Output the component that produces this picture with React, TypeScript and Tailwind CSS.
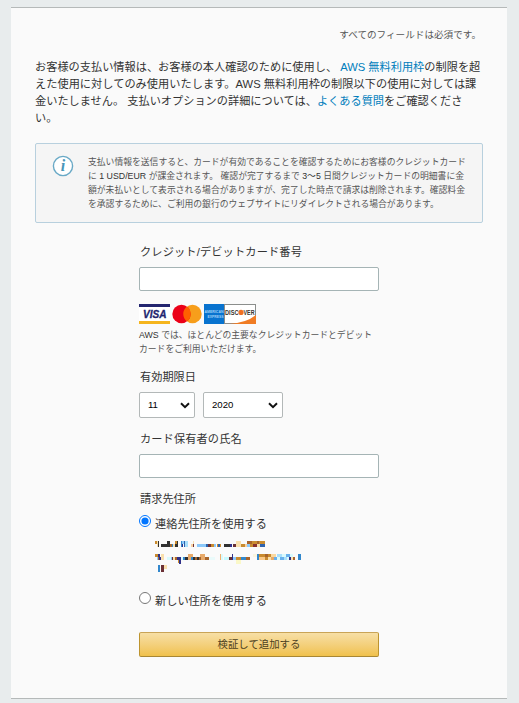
import React from "react";

const NAVY = "#23256f";
const jp = "font-['Liberation_Sans','Noto_Sans_CJK_JP',sans-serif]";

function InfoIcon() {
  return (
    <svg width="22" height="22" viewBox="0 0 22 22">
      <circle cx="11" cy="11" r="9.6" fill="#fff" stroke="#69a9c6" strokeWidth="1.4" />
      <text x="11" y="16.4" textAnchor="middle" fontFamily="Liberation Serif, serif" fontStyle="italic" fontWeight="bold" fontSize="16" fill="#4796ba">i</text>
    </svg>
  );
}

function CardLogos() {
  return (
    <svg width="117" height="20" viewBox="0 0 117 20" className="block" fontFamily="Liberation Sans, sans-serif">
      <rect width="31" height="20" fill="#fff" />
      <rect width="31" height="3" fill={NAVY} />
      <rect y="17" width="31" height="3" fill="#f5b51e" />
      <text x="4" y="14" fontSize="10.5" fontWeight="bold" fontStyle="italic" textLength="23.5" lengthAdjust="spacingAndGlyphs" fill={NAVY} stroke={NAVY} strokeWidth=".3">VISA</text>
      <circle cx="53.5" cy="10" r="9.2" fill="#f79e1b" />
      <circle cx="42.5" cy="10" r="9.2" fill="#eb0018" />
      <path d="M48 2.6a9.2 9.2 0 0 1 0 14.8a9.2 9.2 0 0 1 0-14.8z" fill="#ff5f00" />
      <rect x="65" width="20" height="20" fill="#0873cf" />
      <text x="65.5" y="9" fontSize="4.2" fontWeight="bold" textLength="19" lengthAdjust="spacingAndGlyphs" fill="#a0d0f6">AMERICAN</text>
      <text x="68.5" y="14" fontSize="4.2" fontWeight="bold" textLength="16" lengthAdjust="spacingAndGlyphs" fill="#a0d0f6">EXPRESS</text>
      <rect x="85.5" y=".5" width="31" height="19" fill="#fff" stroke="#8b8e8c" />
      <path d="M117 11v9H90q17-1 27-9z" fill="#f07c24" />
      <text x="86" y="10.8" fontSize="6.6" fontWeight="bold" textLength="13.5" lengthAdjust="spacingAndGlyphs" fill="#39352f">DISC</text>
      <circle cx="102" cy="8.4" r="2.6" fill="#f07024" />
      <text x="104.5" y="10.8" fontSize="6.6" fontWeight="bold" textLength="11" lengthAdjust="spacingAndGlyphs" fill="#39352f">VER</text>
    </svg>
  );
}

// Redacted address blocks: x, y, width, height, colour on a third-of-a-pixel grid.
const blocks: [number, number, number, number, string][] = [
  [15, 18, 6, 9, "#c98b2f"], [21, 18, 3, 18, "#f9dfae"], [24, 18, 3, 18, "#303030"], [33, 27, 27, 9, "#303030"], [51, 18, 9, 9, "#303030"],
  [60, 27, 6, 9, "#a86a2c"], [66, 27, 3, 9, "#3187cc"], [69, 27, 6, 9, "#f9dfae"], [75, 18, 9, 9, "#c98b2f"], [75, 27, 6, 9, "#303030"], [81, 18, 3, 18, "#303030"],
  [93, 18, 3, 18, "#3187cc"], [96, 18, 6, 9, "#8cc9fa"], [96, 27, 3, 9, "#303088"], [102, 18, 3, 18, "#2d63ad"], [105, 18, 9, 18, "#a9dffb"],
  [123, 27, 6, 9, "#fad0a0"], [129, 18, 3, 9, "#f9dfae"], [129, 27, 3, 9, "#6b3035"],
  [141, 27, 27, 9, "#8cc9fa"], [168, 27, 6, 9, "#2d63ad"], [174, 27, 9, 9, "#6b3035"], [183, 27, 9, 9, "#c98b2f"], [192, 27, 6, 9, "#8cc9fa"], [201, 27, 3, 9, "#c98b2f"], [204, 27, 6, 9, "#2d63ad"], [210, 27, 3, 9, "#c98b2f"],
  [222, 27, 18, 9, "#303030"], [240, 27, 6, 9, "#303088"], [249, 27, 9, 9, "#6b3035"], [258, 18, 15, 18, "#f9dfae"], [273, 27, 12, 9, "#c98b2f"], [285, 27, 6, 9, "#fad0a0"],
  [291, 18, 15, 9, "#a8642b"], [291, 27, 9, 9, "#8cc9fa"], [300, 27, 9, 9, "#c98b2f"], [306, 18, 15, 9, "#c98b2f"], [309, 27, 12, 9, "#89302d"], [321, 18, 6, 9, "#a8642b"], [321, 27, 9, 9, "#f9dfae"], [327, 18, 18, 9, "#c98b2f"], [330, 27, 15, 9, "#3064ae"],
  [15, 57, 9, 9, "#c98b2f"], [21, 66, 3, 9, "#8cc9fa"], [24, 57, 6, 9, "#303088"], [24, 66, 3, 9, "#a8642b"], [27, 66, 6, 9, "#303088"], [33, 57, 9, 18, "#f9dfae"],
  [51, 66, 12, 9, "#d9fafc"], [63, 66, 3, 9, "#8cc9fa"], [66, 66, 3, 9, "#6b3035"], [69, 66, 6, 9, "#f9dfae"], [75, 66, 6, 9, "#a8642b"], [81, 66, 6, 9, "#303088"], [87, 66, 6, 21, "#303088"], [84, 75, 3, 9, "#c98b2f"],
  [93, 66, 6, 9, "#d9fafc"], [99, 66, 6, 9, "#3187cc"], [105, 66, 9, 9, "#303030"], [114, 57, 15, 18, "#e7aa6a"], [123, 66, 6, 9, "#3187cc"], [129, 66, 6, 9, "#303030"], [135, 66, 6, 9, "#a8642b"], [141, 66, 6, 9, "#303030"], [147, 66, 6, 9, "#a8642b"], [150, 57, 15, 9, "#e7aa6a"], [153, 66, 12, 9, "#e7aa6a"], [165, 66, 12, 9, "#a8642b"], [177, 66, 18, 9, "#eafafa"],
  [210, 57, 3, 18, "#f0b070"], [213, 57, 6, 18, "#d9fafc"], [222, 66, 15, 9, "#c8faff"], [237, 66, 12, 9, "#6b3035"], [246, 57, 3, 18, "#303088"], [249, 66, 9, 9, "#8cc9fa"], [258, 66, 15, 9, "#c98b2f"], [273, 66, 15, 9, "#3187cc"], [288, 66, 12, 9, "#a8642b"], [258, 75, 15, 12, "#faf8c8"],
  [309, 57, 12, 9, "#faf5df"], [321, 57, 6, 18, "#3187cc"], [327, 57, 18, 9, "#c98b2f"], [327, 66, 18, 9, "#fac989"], [345, 57, 9, 9, "#a8642b"], [345, 66, 9, 9, "#c98b2f"], [354, 57, 9, 9, "#c98b2f"], [354, 66, 9, 9, "#f9dfae"], [363, 66, 9, 9, "#e7aa6a"], [363, 57, 15, 9, "#fad9a0"], [372, 66, 9, 9, "#69b1ed"],
  [381, 57, 15, 9, "#a9dffb"], [381, 66, 9, 9, "#d9fafc"], [390, 66, 12, 9, "#69b1ed"], [396, 57, 12, 9, "#d9fafc"], [402, 66, 9, 9, "#a9dffb"], [408, 57, 12, 9, "#69b1ed"], [411, 66, 6, 9, "#d9fafc"], [417, 66, 6, 9, "#303088"], [420, 57, 9, 9, "#d9fafc"], [423, 66, 6, 9, "#f9dfae"], [429, 66, 6, 9, "#a8642b"], [444, 57, 9, 18, "#3187cc"],
  [24, 90, 6, 21, "#3187cc"], [33, 90, 9, 21, "#6b3035"], [42, 90, 9, 12, "#f9dfae"],
];

function RedactedAddress() {
  return (
    <svg width="150" height="32" viewBox="15 18 450 96" shapeRendering="crispEdges" className="block">
      {blocks.map(([x, y, w, h, c], i) => (
        <rect key={i} x={x} y={y} width={w} height={h} fill={c} />
      ))}
    </svg>
  );
}

function Select({ value, className }: { value: string; className: string }) {
  return (
    <button type="button" className={`flex h-[26px] items-center justify-between rounded-[2px] border border-[#b3b8b8] bg-white pl-2 pr-[4px] text-[9.6px] text-black ${className}`}>
      <span className="pt-px">{value}</span>
      <svg width="10" height="7" viewBox="0 0 10 7" fill="none" stroke="#111" strokeWidth="2">
        <path d="M1 1.3 5 5.1 9 1.3" />
      </svg>
    </button>
  );
}

const label = "ml-px block h-4 whitespace-nowrap text-[11.2px] leading-4";
const input = "block h-6 w-[240px] rounded-[2px] border border-[#a5b4b5] bg-white outline-none";

export default function App() {
  return (
    <div className={`h-[703px] w-[519px] overflow-hidden bg-[#e8eced] pl-[11px] pt-[7px] text-[#333] ${jp}`}>
      <main className="h-[692px] w-[496px] border-y border-[#b5b9b9] bg-[#fafafa]">
        <p className="mt-[19px] h-4 whitespace-nowrap pr-[26px] text-right text-[9.6px] leading-4 text-[#555]">すべてのフィールドは必須です。</p>
        <div className="ml-6 mt-[16px] whitespace-nowrap text-[11.2px] leading-[17px]">
          <p>お客様の支払い情報は、お客様の本人確認のために使用し、 <a className="text-[#007dbc]">AWS 無料利用枠</a>の制限を超</p>
          <p className="tracking-[0.03px]">えた使用に対してのみ使用いたします。AWS 無料利用枠の制限以下の使用に対しては課</p>
          <p>金いたしません。 支払いオプションの詳細については、<a className="text-[#007dbc]">よくある質問</a>をご確認くださ</p>
          <p>い。</p>
        </div>
        <section className="ml-6 mt-[16px] flex h-20 w-[448px] rounded-[2px] border border-[#b8d0de] bg-[#f5f5f5] pl-4 pt-[11px]">
          <InfoIcon />
          <div className="ml-[14px] whitespace-nowrap text-[8.8px] leading-[14px] text-[#555]">
            <p>支払い情報を送信すると、カードが有効であることを確認するためにお客様のクレジットカード</p>
            <p>に <span className="text-[#333]">1 USD/EUR</span> が課金されます。 確認が完了するまで <span className="text-[#333]">3～5</span> 日間クレジットカードの明細書に金</p>
            <p>額が未払いとして表示される場合がありますが、完了した時点で請求は削除されます。確認料金</p>
            <p>を承認するために、ご利用の銀行のウェブサイトにリダイレクトされる場合があります。</p>
          </div>
        </section>
        <form className="ml-[128px] mt-[21px] w-[240px]">
          <label className={`tracking-[0.15px] ${label}`}>クレジット/デビットカード番号</label>
          <input className={`mt-[7px] ${input}`} />
          <div className="mt-[13px]"><CardLogos /></div>
          <p className="mt-[4px] whitespace-nowrap text-[8.8px] leading-[14px] text-[#555]">
            <span className="text-[#333]">AWS</span> では、ほとんどの主要なクレジットカードとデビット<br />カードをご利用いただけます。
          </p>
          <label className={`mt-[13px] ${label}`}>有効期限日</label>
          <div className="mt-[7px] flex gap-2">
            <Select value="11" className="w-14" />
            <Select value="2020" className="w-20" />
          </div>
          <label className={`mt-[13px] tracking-[0.12px] ${label}`}>カード保有者の氏名</label>
          <input className={`mt-[7px] ${input}`} />
          <p className={`mt-[13px] ${label}`}>請求先住所</p>
          <label className="mt-[8px] flex h-[18px] gap-1 whitespace-nowrap text-[11.2px] leading-[18px]">
            <input type="radio" name="address" defaultChecked className="h-3 w-3" />
            <span>連絡先住所を使用する</span>
          </label>
          <div className="ml-4 mt-[8px]"><RedactedAddress /></div>
          <label className="mt-[19px] flex h-[18px] gap-1 whitespace-nowrap text-[11.2px] leading-[18px]">
            <input type="radio" name="address" className="h-3 w-3" />
            <span>新しい住所を使用する</span>
          </label>
          <button type="button" className="mt-[22px] block h-[25px] w-[240px] rounded-[2px] border border-x-[#bd942f] border-b-[#a88734] border-t-[#c9a457] bg-gradient-to-b from-[#f7dfa5] to-[#f0c14b] text-[10.4px] leading-[23px] text-[#4c4020]">検証して追加する</button>
        </form>
      </main>
    </div>
  );
}
